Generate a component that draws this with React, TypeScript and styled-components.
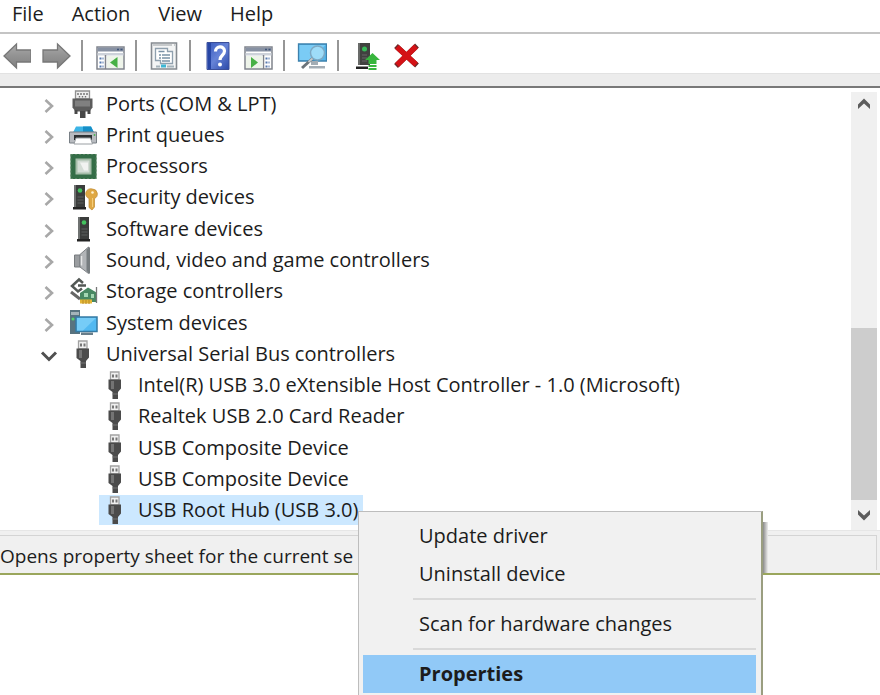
import React from "react";
import styled, { createGlobalStyle } from "styled-components";

const GlobalStyle = createGlobalStyle`
  * { box-sizing: border-box; }
  body { margin: 0; background: #fff; }
  button { font: inherit; color: inherit; border: 0; padding: 0; background: none; }
`;

const Page = styled.div`
  position: relative;
  min-height: 100vh;
  overflow: hidden;
  color: #1c1c1c;
  font-family: "Open Sans", "Noto Sans", sans-serif;
  font-size: 20px;
  line-height: 28px;
`;

const MenuBar = styled.nav`
  display: flex;
  height: 34px;
  padding-left: 12px;
  gap: 28px;
  border-bottom: 2px solid #c4c4c4;
`;

const MenuButton = styled.button`
  height: 28px;
`;

const Toolbar = styled.div`
  display: flex;
  align-items: center;
  height: 39px;
  margin-left: -4px;
  padding-top: 4px;
`;

const ToolButton = styled.button`
  display: flex;
  justify-content: center;
  width: 40px;
  height: 32px;
  align-items: center;
`;

const ToolSeparator = styled.span`
  width: 2px;
  height: 31px;
  margin: 0 7px 0 5px;
  background: #969696;
`;

const Band = styled.div`
  height: 15px;
  background: #ececec;
  border-top: 1px solid #e2e2e2;
  border-bottom: 2px solid #787878;
`;

const Pane = styled.main`
  display: flex;
  justify-content: space-between;
  padding-right: 3px;
`;

const Tree = styled.ul`
  flex: 1;
  display: grid;
  grid-auto-rows: 1fr;
  min-height: 438px;
  margin: 0 0 4px;
  padding: 0;
  list-style: none;
`;

const TreeRow = styled.li<{ $child?: boolean }>`
  display: flex;
  align-items: center;
  padding-left: ${(p) => (p.$child ? 99 : 30)}px;
`;

const Toggle = styled.button`
  display: flex;
  align-items: center;
  justify-content: center;
  width: 37px;
  height: 28px;
  padding-top: 4px;
`;

const Item = styled.span<{ $selected?: boolean }>`
  display: flex;
  align-items: center;
  height: 30px;
  padding-right: 5px;
  white-space: nowrap;
  background: ${(p) => (p.$selected ? "#cce8ff" : "transparent")};
`;

const ItemIcon = styled.span`
  display: flex;
  justify-content: center;
  width: 32px;
  margin-right: 7px;
`;

const ScrollBar = styled.div`
  display: grid;
  grid-template-rows: 24px 1fr 172px 30px;
  width: 26px;
  margin-top: 4px;
  background: #f0f0f0;
`;

const ScrollArrow = styled.button<{ $end?: boolean }>`
  grid-row: ${(p) => (p.$end ? 4 : 1)};
  display: flex;
  align-items: center;
  justify-content: center;
`;

const ScrollThumb = styled.div`
  grid-row: 3;
  background: #cdcdcd;
`;

const StatusBar = styled.footer`
  display: flex;
  height: 45px;
  padding: 4px 3px 3px 0;
  background: #f0f0f0;
  border-top: 1px solid #e6e6e6;
  border-bottom: 2px solid #9aa65c;
`;

const StatusText = styled.span`
  flex: 1;
  padding-top: 5px;
  font-size: 19px;
  line-height: 30px;
  border-top: 1px solid #d4d4d4;
  border-right: 1px solid #d4d4d4;
  white-space: nowrap;
`;

const ContextMenu = styled.div`
  position: absolute;
  left: 358px;
  top: 511px;
  width: 405px;
  padding: 5px 5px 8px 4px;
  background: #f1f1f1;
  border: 1px solid #bdbdbd;
  border-right: 2px solid #9a9e80;
`;

const MenuShadow = styled.div`
  position: absolute;
  left: 763px;
  top: 522px;
  width: 5px;
  height: 51px;
  background: linear-gradient(90deg, #8a8a8a, #eee);
`;

const MenuItem = styled.button<{ $active?: boolean }>`
  display: block;
  width: 100%;
  height: 38px;
  padding-left: 56px;
  text-align: left;
  background: ${(p) => (p.$active ? "#91c9f7" : "transparent")};
  font-weight: ${(p) => (p.$active ? 700 : 400)};
`;

const MenuRule = styled.hr`
  height: 2px;
  margin: 5px 0 5px 50px;
  border: 0;
  background: #d9d9d9;
`;

const Svg = ({ w = 30, h = 30, children }: { w?: number; h?: number; children: React.ReactNode }) => (
  <svg width={w} height={h} viewBox={`0 0 ${w} ${h}`} aria-hidden="true">
    {children}
  </svg>
);

const Chevron = ({ open }: { open?: boolean }) => (
  <Svg w={18} h={18}>
    <path
      d={open ? "M2 5.5l7 7 7-7" : "M5.5 3l6.5 6-6.5 6"}
      fill="none"
      stroke={open ? "#505050" : "#a8a8a8"}
      strokeWidth={open ? 3 : 2.6}
    />
  </Svg>
);

const ScrollChevron = ({ up }: { up?: boolean }) => (
  <Svg w={14} h={14}>
    <path
      d={up ? "M1 12V7.500L7 1.500l6 6V12L7 6.500z" : "M1 2v4.500l6 6 6-6V2L7 7.500z"}
      fill="#5c5c5c"
    />
  </Svg>
);

const Arrow = ({ flip }: { flip?: boolean }) => (
  <Svg>
    <defs>
      <linearGradient id={flip ? "arrowF" : "arrowB"} x1="0" y1="0" x2="0" y2="1">
        <stop offset="0" stopColor="#aaa" />
        <stop offset=".5" stopColor="#929292" />
        <stop offset="1" stopColor="#808080" />
      </linearGradient>
    </defs>
    <path
      transform={flip ? "translate(31 0) scale(-1 1)" : "translate(1 0)"}
      d="M2 15L14.500 3v6H29v12H14.500v6z"
      fill={`url(#${flip ? "arrowF" : "arrowB"})`}
      stroke="#777"
      strokeWidth="1.300"
    />
  </Svg>
);

const WindowIcon = ({ play }: { play?: boolean }) => (
  <Svg>
    <path d="M2 6h27v22H2z" fill="#fff" stroke="#80848c" strokeWidth="1.500" />
    <path d="M2.500 6.500h26v4h-26z" fill="#8791a3" />
    <path d="M22 8.500h2M25.500 8.500h2" stroke="#3f5478" strokeWidth="1.500" />
    <path d="M2.500 12h26v2.500h-26z" fill="#cdd2da" />
    {play ? (
      <>
        <path d="M20.500 14v14" stroke="#80848c" strokeWidth="1.500" />
        <path d="M22.500 17.500h4M22.500 21.500h4M22.500 25.500h4" stroke="#5578ae" strokeWidth="2" strokeDasharray="2 1" />
        <path d="M3 15h16.500v12H3z" fill="#eef4ea" />
        <path d="M8 16l7 5.500L8 27z" fill="#47b045" />
      </>
    ) : (
      <>
        <path d="M10.500 14v14" stroke="#80848c" strokeWidth="1.500" />
        <path d="M4.500 17.500h4M4.500 21.500h4M4.500 25.500h4" stroke="#5578ae" strokeWidth="2" strokeDasharray="2 1" />
        <path d="M12 15h16v12H12z" fill="#eef4ea" />
        <path d="M22.500 16v11L15 21.500z" fill="#47b045" />
      </>
    )}
  </Svg>
);

const PropertiesIcon = () => (
  <Svg>
    <path d="M2.500 2h25v26h-25z" fill="#f4f5f5" stroke="#858a90" strokeWidth="1.600" />
    <path d="M4 4h19M25 4h1" stroke="#b6babd" strokeWidth="1.500" />
    <path d="M6.500 7.500h12v3h5v12h-12v-3h-5z" fill="#fff" stroke="#8fa0ae" strokeWidth="1.300" />
    <path d="M9.500 10.500h6M10 14h2M13 14h8M10 17h2M13 17h8M13 20h8" stroke="#7a92a7" strokeWidth="1.400" />
    <path d="M7 25.500h4M18 25.500h7" stroke="#a5b3bb" strokeWidth="2" />
    <path d="M12 25h5" stroke="#3cb6d4" strokeWidth="3" />
  </Svg>
);

const HelpIcon = () => (
  <Svg>
    <defs>
      <linearGradient id="help" x1="0" y1="0" x2="1" y2="1">
        <stop offset="0" stopColor="#3658bc" />
        <stop offset=".5" stopColor="#6683d7" />
        <stop offset="1" stopColor="#2a48a8" />
      </linearGradient>
    </defs>
    <path d="M4 1.500h22v27H4z" fill="url(#help)" stroke="#3b4f9a" />
    <path d="M5 2h3v26H5z" fill="#2746a5" />
    <path d="M12.500 10.500c0-6 9-6 9-.5 0 4.500-4.500 4-4.500 9" fill="none" stroke="#fff" strokeWidth="3.200" />
    <circle cx="17" cy="23.500" r="2" fill="#fff" />
  </Svg>
);

const ScanIcon = () => (
  <Svg>
    <path d="M1.500 3h28v17h-28z" fill="#54b5ea" stroke="#3d81ad" strokeWidth="1.300" />
    <path d="M2.500 4h26L14 19H2.500z" fill="#7acbf5" />
    <path d="M14 20h7v4h-7zM12 25h16v2.500H12z" fill="#a3adb5" />
    <circle cx="20.500" cy="12" r="7" fill="#9edcf8" stroke="#7da9c4" strokeWidth="1.500" />
    <path d="M15.500 17.500L5 27" stroke="#6c747a" strokeWidth="3" />
    <path d="M15.500 17.500l-4 3.500" stroke="#c3c9cc" strokeWidth="2" />
  </Svg>
);

const UpdateIcon = () => (
  <Svg>
    <path d="M7 2h12v22H7z" fill="#40413f" />
    <path d="M7 2h2v22H7z" fill="#696b69" />
    <path d="M5 25.500h12V28H5z" fill="#222" />
    <path d="M11 14h5M11 17h5M11 20h5" stroke="#676767" />
    <circle cx="13.500" cy="8" r="2.500" fill="#37bb58" />
    <path d="M21.500 12l7.500 7h-3.500v4h-8v-4H14z" fill="#38b63e" />
    <path d="M17.500 25h8M17.500 28h8" stroke="#38b63e" strokeWidth="1.800" />
  </Svg>
);

const RemoveIcon = () => (
  <Svg>
    <path d="M5 5l21 19.500M26 4.500L5 25" stroke="#6d2a2a" strokeWidth="5.500" />
    <path d="M6 6l19 17.500M25 5.500L6 24" stroke="#d41216" strokeWidth="5.500" />
  </Svg>
);

const UsbIcon = () => (
  <Svg h={28}>
    <path d="M10.500 1h8.500v8h-8.500z" fill="#f0f0f0" stroke="#a2a2a2" strokeWidth="1.300" />
    <path d="M12 3.500h2v3h-2zM15.500 3.500h2v3h-2z" fill="#777" />
    <path d="M8.500 8.500H21v9l-3 3.500V28h-5.500v-7l-4-3z" fill="#4b4b4b" />
    <path d="M11 10h3v8h-3z" fill="#747474" />
    <path d="M12.500 23H18" stroke="#777" />
  </Svg>
);

const PortIcon = () => (
  <Svg h={28}>
    <path d="M7.500 1h14v8h-14z" fill="#eee" stroke="#919191" strokeWidth="1.300" />
    <path d="M10 3v2M13 3v2M16 3v2M19 3v2M11.500 6v1.500M14.500 6v1.500M17.500 6v1.500" stroke="#707070" strokeWidth="1.400" />
    <path d="M4.500 8.500h20v9l-3 4H7.500l-3-4z" fill="#5c5c5c" />
    <path d="M7 10.500h15v6H7z" fill="#808080" />
    <path d="M6.500 20h3v4h-3zM19.500 20h3v4h-3zM12 21h5.500v7H12z" fill="#484848" />
  </Svg>
);

const PrinterIcon = () => (
  <Svg h={28}>
    <path d="M8 5.500h15l3 6H5z" fill="#3cb4e6" />
    <path d="M15 5.500h8l3 6H15z" fill="#168fc7" />
    <path d="M1.500 11h27v11h-27z" fill="#b8bbc0" stroke="#787f85" />
    <path d="M6 14h18v5H6z" fill="#2e3133" />
    <path d="M8 17h14.500l2 6H6z" fill="#fff" stroke="#9a9fa3" />
    <path d="M26.500 13v2" stroke="#52b45c" strokeWidth="1.500" />
  </Svg>
);

const ProcessorIcon = () => (
  <Svg h={28}>
    <path d="M2.500 2h26v25h-26z" fill="#346d47" />
    <path d="M3 2.500h25v24H3z" fill="none" stroke="#55825f" strokeDasharray="2 2" />
    <path d="M8.500 7.500h14v14h-14z" fill="#d3dcd5" stroke="#a5bda9" strokeWidth="2" />
    <path d="M12 10.500h8v8h-4z" fill="#f1f3f1" />
  </Svg>
);

const Tower = ({ x = 9 }: { x?: number }) => (
  <g transform={`translate(${x} 0)`}>
    <path d="M1 2h11v22H1z" fill="#3b3d3c" />
    <path d="M1 2h2v22H1z" fill="#6f7271" />
    <path d="M0 24h13v2.500H0z" fill="#242424" />
    <path d="M4.500 14h6M4.500 17h6M4.500 20h6" stroke="#5d605f" />
    <circle cx="7" cy="7.500" r="2.300" fill="#43c35e" />
  </g>
);

const SecurityIcon = () => (
  <Svg h={28}>
    <Tower x={5} />
    <path d="M24.500 6a5 5 0 0 1 2 9.500V24L24 27l-3-2.500v-9A5 5 0 0 1 24.500 6z" fill="#dfa844" stroke="#bd8932" strokeWidth=".7" />
    <circle cx="24.500" cy="9.500" r="1.300" fill="#fff3d2" />
    <path d="M24.500 15v9" stroke="#f5cd7b" />
  </Svg>
);

const SoftwareIcon = () => (
  <Svg h={28}>
    <Tower />
  </Svg>
);

const SoundIcon = () => (
  <Svg h={28}>
    <path d="M6.500 9H12v12H6.500z" fill="#9a9da0" stroke="#777b7e" />
    <path d="M12 8.500L20.500 1v26.500L12 21z" fill="#b1b4b7" stroke="#7d8184" />
    <path d="M18.500 3.500l3.500-2.500v27l-3.500-3z" fill="#777d80" />
    <path d="M13.500 10v9.500" stroke="#e5e6e7" strokeWidth="1.500" />
  </Svg>
);

const StorageIcon = () => (
  <Svg h={28}>
    <path d="M15 6l-4-3.500L4 9l6 5.500 4-3M10 8.500h8" fill="none" stroke="#535855" strokeWidth="2.500" />
    <path d="M3 15l9 7" stroke="#666" strokeWidth="3" />
    <path d="M12 16l8-5.500 8.500 5V25H12z" fill="#488862" />
    <path d="M16 16h4v4h-4zM23 17h3v4h-3z" fill="#a3d6b2" />
    <path d="M12 22.500h12v4H12z" fill="#e2b637" />
    <path d="M15 23v4M18 23v4M21 23v4" stroke="#b98a25" />
    <path d="M28.500 10v16" stroke="#777" strokeWidth="1.300" />
  </Svg>
);

const SystemIcon = () => (
  <Svg h={28}>
    <path d="M2 1h10v24H2z" fill="#59737f" />
    <path d="M3 3h8v3H3z" fill="#a4b4ba" />
    <circle cx="5" cy="10" r="1.500" fill="#56d26e" />
    <path d="M8 8h21v14.500H8z" fill="#52b9f1" stroke="#367ba4" strokeWidth="1.500" />
    <path d="M9 9h19L15 21.500H9z" fill="#76ccf7" />
    <path d="M13 23.500h12V26H13z" fill="#697e8a" />
  </Svg>
);

const categories: [string, React.FC][] = [
  ["Ports (COM & LPT)", PortIcon],
  ["Print queues", PrinterIcon],
  ["Processors", ProcessorIcon],
  ["Security devices", SecurityIcon],
  ["Software devices", SoftwareIcon],
  ["Sound, video and game controllers", SoundIcon],
  ["Storage controllers", StorageIcon],
  ["System devices", SystemIcon],
  ["Universal Serial Bus controllers", UsbIcon],
];

const usbDevices = [
  "Intel(R) USB 3.0 eXtensible Host Controller - 1.0 (Microsoft)",
  "Realtek USB 2.0 Card Reader",
  "USB Composite Device",
  "USB Composite Device",
  "USB Root Hub (USB 3.0)",
];

export default function App() {
  return (
    <Page>
      <GlobalStyle />
      <MenuBar aria-label="Main menu">
        {["File", "Action", "View", "Help"].map((name) => (
          <MenuButton key={name}>{name}</MenuButton>
        ))}
      </MenuBar>
      <Toolbar role="toolbar">
        <ToolButton aria-label="Back"><Arrow /></ToolButton>
        <ToolButton aria-label="Forward"><Arrow flip /></ToolButton>
        <ToolSeparator />
        <ToolButton aria-label="Show console tree"><WindowIcon /></ToolButton>
        <ToolSeparator />
        <ToolButton aria-label="Properties"><PropertiesIcon /></ToolButton>
        <ToolSeparator />
        <ToolButton aria-label="Help"><HelpIcon /></ToolButton>
        <ToolButton aria-label="Show action pane"><WindowIcon play /></ToolButton>
        <ToolSeparator />
        <ToolButton aria-label="Scan for hardware changes"><ScanIcon /></ToolButton>
        <ToolSeparator />
        <ToolButton aria-label="Update driver"><UpdateIcon /></ToolButton>
        <ToolButton aria-label="Uninstall device"><RemoveIcon /></ToolButton>
      </Toolbar>
      <Band />
      <Pane>
        <Tree role="tree">
          {categories.map(([name, Icon], i) => {
            const open = i === categories.length - 1;
            return (
              <TreeRow key={name} role="treeitem" aria-expanded={open}>
                <Toggle aria-label={`${open ? "Collapse" : "Expand"} ${name}`}>
                  <Chevron open={open} />
                </Toggle>
                <Item>
                  <ItemIcon><Icon /></ItemIcon>
                  {name}
                </Item>
              </TreeRow>
            );
          })}
          {usbDevices.map((name, i) => {
            const selected = i === usbDevices.length - 1;
            return (
              <TreeRow key={i} $child role="treeitem" aria-selected={selected}>
                <Item $selected={selected}>
                  <ItemIcon><UsbIcon /></ItemIcon>
                  {name}
                </Item>
              </TreeRow>
            );
          })}
        </Tree>
        <ScrollBar>
          <ScrollArrow aria-label="Scroll up"><ScrollChevron up /></ScrollArrow>
          <ScrollThumb />
          <ScrollArrow $end aria-label="Scroll down"><ScrollChevron /></ScrollArrow>
        </ScrollBar>
      </Pane>
      <StatusBar>
        <StatusText>Opens property sheet for the current se</StatusText>
      </StatusBar>
      <MenuShadow />
      <ContextMenu role="menu">
        <MenuItem role="menuitem">Update driver</MenuItem>
        <MenuItem role="menuitem">Uninstall device</MenuItem>
        <MenuRule />
        <MenuItem role="menuitem">Scan for hardware changes</MenuItem>
        <MenuRule />
        <MenuItem role="menuitem" $active>Properties</MenuItem>
      </ContextMenu>
    </Page>
  );
}
